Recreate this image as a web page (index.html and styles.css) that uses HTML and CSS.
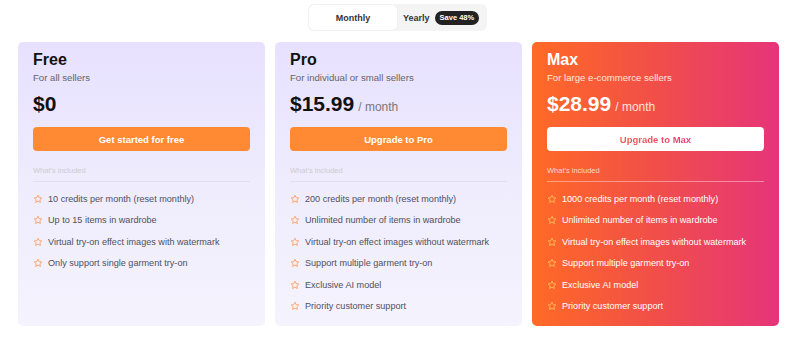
FILE: index.html
```html
<!DOCTYPE html>
<html>
<head>
<meta charset="utf-8">
<link rel="stylesheet" href="styles.css">
</head>
<body>
<div class="page">
  <div class="toggle-wrap">
    <div class="toggle">
      <div class="tab active">Monthly</div>
      <div class="tab">Yearly <span class="badge">Save 48%</span></div>
    </div>
  </div>
  <div class="cards">
    <div class="card light">
      <div class="title">Free</div>
      <div class="sub">For all sellers</div>
      <div class="price"><span class="amount">$0</span></div>
      <div class="btn orange">Get started for free</div>
      <div class="inc">What's included</div>
      <ul class="feats">
        <li><svg class="star" viewBox="0 0 24 24"><path d="M12 2.8l2.8 5.9 6.4.8-4.7 4.4 1.2 6.4L12 17.2l-5.7 3.1 1.2-6.4-4.7-4.4 6.4-.8z"/></svg>10 credits per month (reset monthly)</li>
        <li><svg class="star" viewBox="0 0 24 24"><path d="M12 2.8l2.8 5.9 6.4.8-4.7 4.4 1.2 6.4L12 17.2l-5.7 3.1 1.2-6.4-4.7-4.4 6.4-.8z"/></svg>Up to 15 items in wardrobe</li>
        <li><svg class="star" viewBox="0 0 24 24"><path d="M12 2.8l2.8 5.9 6.4.8-4.7 4.4 1.2 6.4L12 17.2l-5.7 3.1 1.2-6.4-4.7-4.4 6.4-.8z"/></svg>Virtual try-on effect images with watermark</li>
        <li><svg class="star" viewBox="0 0 24 24"><path d="M12 2.8l2.8 5.9 6.4.8-4.7 4.4 1.2 6.4L12 17.2l-5.7 3.1 1.2-6.4-4.7-4.4 6.4-.8z"/></svg>Only support single garment try-on</li>
      </ul>
    </div>
    <div class="card light">
      <div class="title">Pro</div>
      <div class="sub">For individual or small sellers</div>
      <div class="price"><span class="amount">$15.99</span><span class="per">/ month</span></div>
      <div class="btn orange">Upgrade to Pro</div>
      <div class="inc">What's included</div>
      <ul class="feats">
        <li><svg class="star" viewBox="0 0 24 24"><path d="M12 2.8l2.8 5.9 6.4.8-4.7 4.4 1.2 6.4L12 17.2l-5.7 3.1 1.2-6.4-4.7-4.4 6.4-.8z"/></svg>200 credits per month (reset monthly)</li>
        <li><svg class="star" viewBox="0 0 24 24"><path d="M12 2.8l2.8 5.9 6.4.8-4.7 4.4 1.2 6.4L12 17.2l-5.7 3.1 1.2-6.4-4.7-4.4 6.4-.8z"/></svg>Unlimited number of items in wardrobe</li>
        <li><svg class="star" viewBox="0 0 24 24"><path d="M12 2.8l2.8 5.9 6.4.8-4.7 4.4 1.2 6.4L12 17.2l-5.7 3.1 1.2-6.4-4.7-4.4 6.4-.8z"/></svg>Virtual try-on effect images without watermark</li>
        <li><svg class="star" viewBox="0 0 24 24"><path d="M12 2.8l2.8 5.9 6.4.8-4.7 4.4 1.2 6.4L12 17.2l-5.7 3.1 1.2-6.4-4.7-4.4 6.4-.8z"/></svg>Support multiple garment try-on</li>
        <li><svg class="star" viewBox="0 0 24 24"><path d="M12 2.8l2.8 5.9 6.4.8-4.7 4.4 1.2 6.4L12 17.2l-5.7 3.1 1.2-6.4-4.7-4.4 6.4-.8z"/></svg>Exclusive AI model</li>
        <li><svg class="star" viewBox="0 0 24 24"><path d="M12 2.8l2.8 5.9 6.4.8-4.7 4.4 1.2 6.4L12 17.2l-5.7 3.1 1.2-6.4-4.7-4.4 6.4-.8z"/></svg>Priority customer support</li>
      </ul>
    </div>
    <div class="card max">
      <div class="title">Max</div>
      <div class="sub">For large e-commerce sellers</div>
      <div class="price"><span class="amount">$28.99</span><span class="per">/ month</span></div>
      <div class="btn white"><span class="grad-text">Upgrade to Max</span></div>
      <div class="inc">What's included</div>
      <ul class="feats">
        <li><svg class="star" viewBox="0 0 24 24"><path d="M12 2.8l2.8 5.9 6.4.8-4.7 4.4 1.2 6.4L12 17.2l-5.7 3.1 1.2-6.4-4.7-4.4 6.4-.8z"/></svg>1000 credits per month (reset monthly)</li>
        <li><svg class="star" viewBox="0 0 24 24"><path d="M12 2.8l2.8 5.9 6.4.8-4.7 4.4 1.2 6.4L12 17.2l-5.7 3.1 1.2-6.4-4.7-4.4 6.4-.8z"/></svg>Unlimited number of items in wardrobe</li>
        <li><svg class="star" viewBox="0 0 24 24"><path d="M12 2.8l2.8 5.9 6.4.8-4.7 4.4 1.2 6.4L12 17.2l-5.7 3.1 1.2-6.4-4.7-4.4 6.4-.8z"/></svg>Virtual try-on effect images without watermark</li>
        <li><svg class="star" viewBox="0 0 24 24"><path d="M12 2.8l2.8 5.9 6.4.8-4.7 4.4 1.2 6.4L12 17.2l-5.7 3.1 1.2-6.4-4.7-4.4 6.4-.8z"/></svg>Support multiple garment try-on</li>
        <li><svg class="star" viewBox="0 0 24 24"><path d="M12 2.8l2.8 5.9 6.4.8-4.7 4.4 1.2 6.4L12 17.2l-5.7 3.1 1.2-6.4-4.7-4.4 6.4-.8z"/></svg>Exclusive AI model</li>
        <li><svg class="star" viewBox="0 0 24 24"><path d="M12 2.8l2.8 5.9 6.4.8-4.7 4.4 1.2 6.4L12 17.2l-5.7 3.1 1.2-6.4-4.7-4.4 6.4-.8z"/></svg>Priority customer support</li>
      </ul>
    </div>
  </div>
</div>
</body>
</html>
```

FILE: styles.css
```css
* { box-sizing: border-box; }
html, body { margin: 0; padding: 0; background: #fff; }
body { font-family: "Liberation Sans", Arial, sans-serif; color: #111; }
.page { padding: 4px 22px 0 18px; }
.toggle-wrap { display: flex; justify-content: center; }
.toggle {
  display: flex; align-items: center;
  background: #f4f4f5; border-radius: 6px;
  padding: 1px; height: 27px; width: 179px;
  margin-left: -1px;
}
.tab {
  display: flex; align-items: center;
  font-size: 9px; font-weight: bold; color: #333;
  height: 25px; padding-left: 6px;
}
.tab.active {
  background: #fff; border-radius: 5px; width: 88px;
  justify-content: center; padding: 0;
  box-shadow: 0 0 2px rgba(0,0,0,0.06);
}
.badge {
  background: #222; color: #fff; border-radius: 8px;
  font-size: 7.5px; padding: 3px 5px; margin-left: 5px;
  line-height: 8px;
}
.cards {
  display: grid; grid-template-columns: repeat(3, 247px);
  column-gap: 10px; margin-top: 11px;
}
.card {
  height: 284px; border-radius: 5px; padding: 9px 15px 0 15px;
}
.card.light {
  background: linear-gradient(180deg, #e7e1ff 0%, #efecfd 50%, #f5f3fd 100%);
}
.card.max {
  background: linear-gradient(90deg, #ff6a26 0%, #f25145 45%, #e6347a 100%);
  color: #fff;
}
.title { font-size: 16px; font-weight: bold; line-height: 18px; }
.sub { font-size: 9.6px; color: #666; margin-top: 3px; line-height: 12px; }
.max .sub { color: #ffe6dc; }
.price { margin-top: 8px; display: flex; align-items: baseline; height: 28px; }
.amount { font-size: 21px; font-weight: bold; }
.per { font-size: 12px; color: #777; margin-left: 4px; }
.max .per { color: #ffe3dc; }
.btn {
  margin-top: 7px; height: 24px; border-radius: 4px;
  display: flex; align-items: center; justify-content: center;
  font-size: 9.5px; font-weight: bold;
}
.btn.orange { background: #ff8a33; color: #fff; }
.btn.white { background: #fff; }
.grad-text {
  background: linear-gradient(90deg, #f2594a, #e63c78);
  -webkit-background-clip: text; background-clip: text; color: transparent;
}
.inc {
  font-size: 7.5px; color: #ccc; margin-top: 15px;
  padding-bottom: 6px; border-bottom: 1px solid #e2e0ec;
}
.max .inc { color: #ffd5c6; border-bottom-color: rgba(255,255,255,0.4); }
.feats { list-style: none; margin: 6px 0 0 0; padding: 0; }
.feats li {
  display: flex; align-items: center; font-size: 9.1px; color: #4f4f5c;
  height: 21.5px; white-space: nowrap;
}
.max .feats li { color: #fff; }
.star {
  width: 10px; height: 10px; margin: 0 5px 0 0; flex: none;
  fill: none; stroke: #ff9a55; stroke-width: 2; stroke-linejoin: round;
}
.max .star { stroke: #ffc45a; }
```
